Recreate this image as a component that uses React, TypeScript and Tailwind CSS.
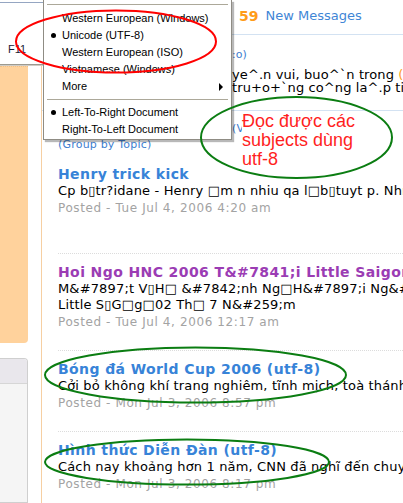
type Post = {
  title: string;
  body: string[];
  posted: string;
  visited?: boolean;
  tail: string;
};

// topic list, newest first
const posts: Post[] = [
  {
    title: 'Henry trick kick',
    body: ['Cp b▯tr?idane - Henry □m n nhiu qa l□b▯tuyt p. Nhn thy'],
    posted: 'Posted - Tue Jul 4, 2006 4:20 am',
    tail: 'pb-[37px]',
  },
  {
    title: 'Hoi Ngo HNC 2006 T&#7841;i Little Saigon',
    body: ['M&#7897;t V▯H□ &#7842;nh Ng□H&#7897;i Ng&#7897;i', 'Little S▯G□g□02 Th□ 7 N&#259;m'],
    posted: 'Posted - Tue Jul 4, 2006 12:17 am',
    visited: true,
    tail: 'pb-[20px]',
  },
  {
    title: 'Bóng đá World Cup 2006 (utf-8)',
    body: ['Cởi bỏ không khí trang nghiêm, tĩnh mịch, toà thánh Vatican'],
    posted: 'Posted - Mon Jul 3, 2006 8:57 pm',
    tail: 'pb-[20px]',
  },
  {
    title: 'Hình thức Diễn Đàn (utf-8)',
    body: ['Cách nay khoảng hơn 1 năm, CNN đã nghĩ đến chuyện'],
    posted: 'Posted - Mon Jul 3, 2006 8:17 pm',
    tail: 'pb-[20px]',
  },
];

const encodings = [
  { label: 'Western European (Windows)' },
  { label: 'Unicode (UTF-8)', checked: true },
  { label: 'Western European (ISO)' },
  { label: 'Vietnamese (Windows)' },
  { label: 'More', submenu: true },
];

const directions = [
  { label: 'Left-To-Right Document', checked: true },
  { label: 'Right-To-Left Document' },
];

// a line whose start is covered by the open menu
const TailLine = ({ children, className }: { children: React.ReactNode; className: string }) => (
  <div className={`flex ${className}`}>
    <span className="w-[174px] shrink-0" />
    <span>{children}</span>
  </div>
);

const LeftRail = () => (
  <div className="w-[28px] shrink-0 flex flex-col">
    <div className="h-[66px]" />
    <div className="h-[277px] bg-[#ffd29c] rounded-br-[4px] border-t border-dotted border-[#f0c08a]" />
    <div className="mt-[15px] flex-1 flex flex-col rounded-tr-[4px] border border-l-0 border-[#cfcfcf] overflow-hidden">
      <div className="h-[25px] bg-[#e9e7ec] border-b border-[#d6d6d6]" />
      <div className="flex-1 bg-[#f5f5f5]" />
    </div>
  </div>
);

const MenuItem = ({ label, checked, submenu }: { label: string; checked?: boolean; submenu?: boolean }) => (
  <div className="relative h-[17px] leading-[17px] pl-[18px]">
    {checked && <span className="absolute left-[7px] top-[6px] w-[5px] h-[5px] rounded-full bg-black" />}
    {label}
    {submenu && (
      <span className="absolute right-[8px] top-[5px] w-0 h-0 border-t-[4px] border-b-[4px] border-l-[4px] border-t-transparent border-b-transparent border-l-black" />
    )}
  </div>
);

const Separator = () => <div className="mx-[3px] h-px bg-[#aca899]" />;

export default function App() {
  return (
    <div className="relative w-[403px] h-[503px] overflow-hidden bg-white font-['DejaVu_Sans',Verdana,sans-serif]">
      <div className="flex h-full">
        <LeftRail />
        <div className="w-[13px] shrink-0" />
        <main className="flex-1 min-w-0 border-l border-[#f6cfa2] overflow-hidden whitespace-nowrap">
          {/* header */}
          <div className="h-[35px] border-b border-[#d3e2f2] flex items-center pl-[197px] pb-[2px]">
            <span className="text-[14px] font-bold text-[#ff9c1a]">59</span>
            <span className="ml-[7px] text-[13px] text-[#3f86d6]">New Messages</span>
          </div>

          {/* previous topic, mostly under the menu */}
          <div className="pl-[16px] pt-[12px] pb-[16px] border-b border-[#d3e2f2]">
            <TailLine className="h-[16px] leading-[16px] text-[11px] text-[#3d7ed0]">:o)</TailLine>
            <div className="mt-[5px] text-[13px] tracking-[0.1px] leading-[13px] text-black">
              <TailLine className="">
                ye^.n vui, buo^`n trong <span className="text-[#ff9c1a]">(</span>
              </TailLine>
              <TailLine className="">tru+o+`ng co^ng la^.p ti`nh</TailLine>
            </div>
          </div>

          <div className="pl-[16px] pt-[10px] text-[11px] tracking-[0.2px] text-[#3d7ed0]">
            <TailLine className="h-[16px] leading-[16px]">(View Threads)</TailLine>
            <div className="h-[16px] leading-[16px]">(Group by Topic)</div>
          </div>

          <div className="mt-[12px]">
            {posts.map((p, i) => (
              <div key={p.title}>
                {i > 0 && <div className="ml-[16px] border-t border-dotted border-[#dcdcdc]" />}
                <div className={`pl-[16px] ${i > 0 ? 'pt-[9px]' : ''} ${p.tail}`}>
                  <div
                    className={`h-[18px] leading-[18px] text-[14px] tracking-[0.4px] font-bold ${
                      p.visited ? 'text-[#9b3cb4]' : 'text-[#3783d8]'
                    }`}
                  >
                    {p.title}
                  </div>
                  {p.body.map((line) => (
                    <div key={line} className="h-[16px] leading-[16px] text-[13px] tracking-[0.15px] text-black">
                      {line}
                    </div>
                  ))}
                  <div className="mt-[1px] h-[16px] leading-[16px] text-[12px] tracking-[0.6px] text-[#a3a3a3]">
                    {p.posted}
                  </div>
                </div>
              </div>
            ))}
          </div>
        </main>
      </div>

      {/* View menu (parent) */}
      <div className="absolute left-0 top-0 w-[46px] h-[65px] bg-white border-b border-[#9d9a90] shadow-[0_1px_0_#cfccc6] font-['Liberation_Sans',Arial,sans-serif] text-[11px]">
        <div className="mt-[2px] h-px bg-[#95a6c2]" />
        <div className="mt-[38px] h-[17px] leading-[17px] pl-[8px] text-[#1b2235]">F11</div>
      </div>

      {/* Encoding submenu */}
      <div className="absolute left-[43px] top-0 w-[189px] h-[140px] bg-white border-l border-r border-b border-[#8f8c84] shadow-[2px_2px_1px_rgba(0,0,0,0.28)] font-['Liberation_Sans',Arial,sans-serif] text-[11px] text-black">
        <div className="pt-[4px]">
          <Separator />
        </div>
        <div className="pt-[5px]">
          {encodings.map((e) => (
            <MenuItem key={e.label} {...e} />
          ))}
        </div>
        <div className="pt-[4px] pb-[4px]">
          <Separator />
        </div>
        {directions.map((d) => (
          <MenuItem key={d.label} {...d} />
        ))}
      </div>

      {/* note */}
      <div className="absolute left-[242px] top-[112px] bg-white pr-[4px] font-['Liberation_Sans',Arial,sans-serif] text-[18px] leading-[19px] text-[#ff1f1f]">
        <div>Đọc được các</div>
        <div>subjects dùng</div>
        <div>utf-8</div>
      </div>

      <svg className="absolute inset-0 pointer-events-none" width="403" height="503" viewBox="0 0 403 503" fill="none">
        <ellipse cx="116" cy="41.5" rx="100" ry="31" stroke="#ff0000" strokeWidth="2" />
        <ellipse cx="296.5" cy="137.5" rx="95.5" ry="40.5" stroke="#0b7d12" strokeWidth="2" />
        <ellipse cx="195.5" cy="375" rx="150.5" ry="27.5" stroke="#0b7d12" strokeWidth="2" />
        <ellipse cx="187" cy="462" rx="142" ry="22.5" stroke="#0b7d12" strokeWidth="2" />
      </svg>
    </div>
  );
}
